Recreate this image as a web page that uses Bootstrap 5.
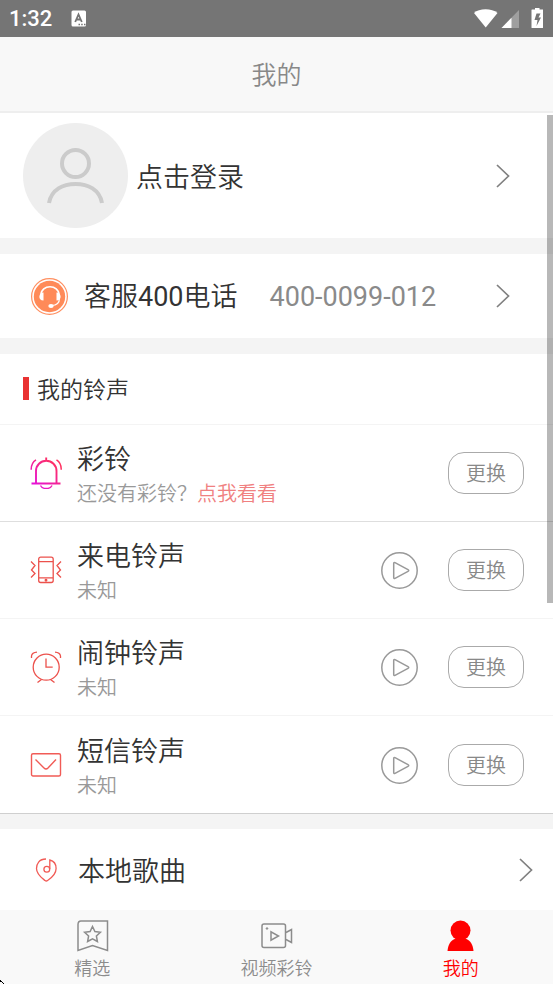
<!DOCTYPE html>
<html lang="zh-CN">
<head>
<meta charset="utf-8">
<meta name="viewport" content="width=device-width, initial-scale=1">
<title>我的</title>
<link href="https://cdn.jsdelivr.net/npm/bootstrap@5.3.0/dist/css/bootstrap.min.css" rel="stylesheet">
<style>
body{font-family:"Noto Sans CJK SC",sans-serif;font-weight:350;background:#f4f4f4;color:#333;font-size:27px;line-height:38px}
svg{display:block;flex:none}
.latin{font-family:Roboto,sans-serif;font-weight:400}
.status-strip{background:#757575;height:37px;padding:0 10px 0 9px;font-family:Roboto,sans-serif;font-size:22px;font-weight:500;line-height:37px}
.status-badge{margin-left:19px}
.title-bar{background:#f8f8f8;color:#888;font-size:25px;line-height:72px;padding-bottom:2px;border-bottom:2px solid #eee}
.panel{background:#fff}
.panel+.panel{margin-top:16px}
.row-link{color:#333;text-decoration:none;padding:0 43px 0 23px}
.profile-link{padding-top:10px;padding-bottom:10px}
.phone-link{height:84px;padding-left:31px}
.phone-number{color:#8a8a8a;margin-left:32px}
.section-head{font-size:23px;font-weight:inherit;line-height:68px;padding:0 0 2px 23px;border-bottom:1px solid #f4f4f4}
.section-head::before{content:"";width:6px;height:23px;background:#e93232;margin-right:8px}
.tone{padding:13px 29px 13px 30px;border-bottom:1px solid #f4f4f4}
.tone:first-child{border-color:#dedede}
.tone:last-child{border-color:#cfcfcf;padding-top:14px}
.tone-icon{margin-right:15px}
.tone-name{font-size:27px;line-height:40px}
.tone-note{font-size:20px;line-height:30px;color:#999}
.tone-note a{color:#f08080}
.change-btn{width:76px;height:42px;border:1px solid #aaa;border-radius:16px;font-size:20px;font-weight:inherit;line-height:30px;color:#888}
.play-btn{margin-right:30px}
.panel.local-panel{margin-top:15px}
.local-link{padding:22px 20px 21px 30px}
.tab-bar{background:#f9f9f9;padding:9px 0 1px}
.tab-bar a{color:#8c8c8c;font-size:18px;line-height:31px}
.tab-bar a.active{color:#f00}
.scroll-thumb{right:0;top:2px;width:6px;height:61.2%;background:rgba(0,0,0,.28)}
.pointer-tip{left:0;bottom:0}
</style>
<script src="https://cdn.jsdelivr.net/npm/bootstrap@5.3.0/dist/js/bootstrap.bundle.min.js"></script>
</head>
<body>
<div class="d-flex flex-column min-vh-100 position-relative">
  <div class="status-strip d-flex align-items-center text-white">
    <span>1:32</span>
    <svg class="status-badge me-auto" width="16" height="17" viewBox="0 0 16 17"><rect x=".5" y=".5" width="14.500" height="16" rx="1.500" fill="#fff"/><path d="M4.200 12 7.500 4.500 10.800 12M5.500 9.500H9.500" fill="none" stroke="#757575" stroke-width="1.800"/><path d="M7.500 14.500h1.500M10.200 14.500h1.500M13 14.500h1.500" stroke="#757575" stroke-width="1.500"/></svg>
    <svg width="70" height="22" viewBox="473 8 70 22"><path d="M474 13C479 8 492 8 497.500 13L485.700 27.500Z" fill="#fff"/><path d="M519 10V28H501.500Z" fill="#9f9f9f"/><path d="M511.500 17.700V28H501.500Z" fill="#fff"/><path d="M532 9.500h3V8h4.500v1.500h3.500V27.500q0 .5-.5.500h-10.500q-.5 0-.5-.5V10q0-.5.500-.5Z" fill="#fff"/><path d="M536.500 13.500h4l-2 4h2.500l-4.500 8.500 1-6h-3Z" fill="#757575"/></svg>
  </div>
  <header class="title-bar text-center">我的</header>

  <main class="position-relative flex-grow-1">
    <section class="panel">
      <a href="#" class="row-link profile-link d-flex align-items-center">
        <svg class="me-2" width="105" height="105" viewBox="0 0 105 105"><circle cx="52.500" cy="52.500" r="52.500" fill="#eee"/><g fill="none" stroke="#cbcbcb" stroke-width="4"><circle cx="52.500" cy="40.500" r="13.500"/><path d="M26 80C28.500 66.500 40 61 52.500 61S76.500 66.500 79 80"/></g></svg>
        <span>点击登录</span>
        <svg class="ms-auto" width="14" height="24" viewBox="0 0 14 24"><path d="M1 1 12.500 12 1 23" fill="none" stroke="#808080" stroke-width="1.700"/></svg>
      </a>
    </section>

    <section class="panel">
      <a href="#" class="row-link phone-link d-flex align-items-center">
        <svg class="me-3" width="37" height="37" viewBox="0 0 37 37"><circle cx="18.500" cy="18.500" r="17.900" fill="none" stroke="#ff8f60" stroke-width="1.200"/><circle cx="18.500" cy="18.500" r="15.700" fill="#ff8a58"/><path d="M10 17C10 6 28 6 28 17" fill="none" stroke="#fff" stroke-width="1.700"/><path d="M12.500 14.500v8c-6 0-5-8 0-8M25.500 14.500v8c6 0 5-8 0-8" fill="#fff"/><path d="M28.500 20C28.500 25 26 27.500 20.500 27.500" fill="none" stroke="#fff" stroke-width="1.200"/><ellipse cx="20" cy="28" rx="2.700" ry="2" fill="#fff"/></svg>
        <span>客服<span class="latin">400</span>电话<span class="latin phone-number">400-0099-012</span></span>
        <svg class="ms-auto" width="14" height="24" viewBox="0 0 14 24"><path d="M1 1 12.500 12 1 23" fill="none" stroke="#808080" stroke-width="1.700"/></svg>
      </a>
    </section>

    <section class="panel">
      <h1 class="section-head d-flex align-items-center mb-0">我的铃声</h1>
      <ul class="list-unstyled mb-0">
        <li class="tone d-flex align-items-center">
          <svg class="tone-icon" width="32" height="32" viewBox="0 0 32 32"><defs><linearGradient id="bell" gradientUnits="userSpaceOnUse" x1="4" y1="29" x2="25" y2="5"><stop offset="0" stop-color="#e411dd"/><stop offset="1" stop-color="#ff315f"/></linearGradient></defs><g fill="none" stroke="url(#bell)" stroke-width="1.900"><path d="M6 26V14a10 10 0 0 1 20.500 0v12M1.500 26.500h29M16.200 .5v3"/><path d="M10.500 28.500c2 4 9.500 4 11.500 0" stroke-width="1.500"/><path d="M6 2.800Q1 6 1.200 12.800M26.500 2.800Q31.500 6 31.200 12.800" stroke-width="1.500"/></g></svg>
          <div class="flex-grow-1"><div class="tone-name">彩铃</div><div class="tone-note">还没有彩铃？<a href="#" class="text-decoration-none">点我看看</a></div></div>
          <button type="button" class="change-btn btn p-0">更换</button>
        </li>
        <li class="tone d-flex align-items-center">
          <svg class="tone-icon" width="32" height="32" viewBox="0 0 32 32" fill="none" stroke="#ec514c" stroke-width="1.300"><rect x="8.700" y="3.200" width="14.500" height="25.300" rx="2"/><path d="M9 7.700h14M9 23.800h14M1 7.500l4 4-3.500 4.500L5 19.500 1 23.500M31 7.500l-4 4 3.500 4.500L27 19.500l4 4"/><circle cx="16" cy="26.200" r=".8"/></svg>
          <div class="flex-grow-1"><div class="tone-name">来电铃声</div><div class="tone-note">未知</div></div>
          <button type="button" class="play-btn btn p-0 border-0" aria-label="播放来电铃声"><svg width="37" height="37" viewBox="0 0 37 37" fill="none" stroke="#999" stroke-width="1.500"><circle cx="18.500" cy="18.500" r="17.700"/><path d="M12.700 11.500Q12.700 10 14 10.700L27 17.600Q28.500 18.500 27 19.400L14 26.300Q12.700 27 12.700 25.500Z"/></svg></button>
          <button type="button" class="change-btn btn p-0">更换</button>
        </li>
        <li class="tone d-flex align-items-center">
          <svg class="tone-icon" width="32" height="32" viewBox="0 0 32 32" fill="none" stroke="#ec514c" stroke-width="1.300"><circle cx="16.200" cy="16.200" r="13"/><path d="M16 7.500v8.700h6.700M1.500 7V5Q2 1.500 7 1.200M30.500 7V5Q30 1.500 25 1.200M11.500 28.500l-4 3M20.500 28.500l4 3"/></svg>
          <div class="flex-grow-1"><div class="tone-name">闹钟铃声</div><div class="tone-note">未知</div></div>
          <button type="button" class="play-btn btn p-0 border-0" aria-label="播放闹钟铃声"><svg width="37" height="37" viewBox="0 0 37 37" fill="none" stroke="#999" stroke-width="1.500"><circle cx="18.500" cy="18.500" r="17.700"/><path d="M12.700 11.500Q12.700 10 14 10.700L27 17.600Q28.500 18.500 27 19.400L14 26.300Q12.700 27 12.700 25.500Z"/></svg></button>
          <button type="button" class="change-btn btn p-0">更换</button>
        </li>
        <li class="tone d-flex align-items-center">
          <svg class="tone-icon" width="32" height="32" viewBox="0 0 32 32" fill="none" stroke="#f15b56" stroke-width="1.400"><rect x="1.500" y="4.700" width="29" height="22.300" rx="1.500"/><path d="M5.500 10.500 14 19q2 2 4 0l8-8.500"/></svg>
          <div class="flex-grow-1"><div class="tone-name">短信铃声</div><div class="tone-note">未知</div></div>
          <button type="button" class="play-btn btn p-0 border-0" aria-label="播放短信铃声"><svg width="37" height="37" viewBox="0 0 37 37" fill="none" stroke="#999" stroke-width="1.500"><circle cx="18.500" cy="18.500" r="17.700"/><path d="M12.700 11.500Q12.700 10 14 10.700L27 17.600Q28.500 18.500 27 19.400L14 26.300Q12.700 27 12.700 25.500Z"/></svg></button>
          <button type="button" class="change-btn btn p-0">更换</button>
        </li>
      </ul>
    </section>

    <section class="panel local-panel">
      <a href="#" class="row-link local-link d-flex align-items-center">
        <svg class="me-3" width="32" height="32" viewBox="0 0 32 32" fill="none" stroke="#f15b56" stroke-width="1.300"><path d="M16 5C9 5 6.500 10 6.500 14.500c0 6 6 10 8.500 12q1.300 1 2.600 0c3-2 8.500-6 8.500-12 0-4-2-7.500-6.300-8.500v9"/><circle cx="16.800" cy="15.300" r="2.900"/></svg>
        <span>本地歌曲</span>
        <svg class="ms-auto" width="14" height="24" viewBox="0 0 14 24"><path d="M1 1 12.500 12 1 23" fill="none" stroke="#808080" stroke-width="1.700"/></svg>
      </a>
    </section>
    <div class="scroll-thumb position-absolute"></div>
  </main>

  <nav class="tab-bar nav nav-justified">
    <a href="#" class="nav-item d-flex flex-column align-items-center text-decoration-none">
      <svg width="33" height="33" viewBox="0 0 33 33" fill="none" stroke="#8c8c8c" stroke-width="1.500"><path d="M5 2H31.500V31.500L16.500 26.500 2 31.500V5.500Q2 2 5 2Z"/><path d="M16.500 7.500l2.400 5 5.500.7-4 3.800 1 5.500-4.900-2.700-4.900 2.700 1-5.500-4-3.800 5.500-.7Z"/></svg>精选</a>
    <a href="#" class="nav-item d-flex flex-column align-items-center text-decoration-none">
      <svg width="33" height="33" viewBox="0 0 33 33" fill="none" stroke="#8c8c8c" stroke-width="1.500"><rect x="2" y="5" width="23.500" height="23.500" rx="2"/><path d="M26 13.500 31.500 10.500V23.500L26 20.500M11 12.800v8.400l7.500-4.200Z"/><circle cx="7" cy="9.500" r=".8" fill="#8c8c8c" stroke-width="1"/></svg>视频彩铃</a>
    <a href="#" class="nav-item active d-flex flex-column align-items-center text-decoration-none" aria-current="page">
      <svg width="33" height="33" viewBox="0 0 33 33" fill="#f00"><circle cx="16.500" cy="11.500" r="10"/><path d="M12 19.500h9C26.500 21 29 26 29.500 32H3.500C4 26 6.500 21 12 19.500Z"/></svg>我的</a>
  </nav>
  <svg class="pointer-tip position-absolute" width="4" height="4" viewBox="0 0 4 4" aria-hidden="true"><path d="M0 0h1v1h1v1H0ZM2 2h1v1h1v1H3V3H2Z"/></svg>
</div>
</body>
</html>
